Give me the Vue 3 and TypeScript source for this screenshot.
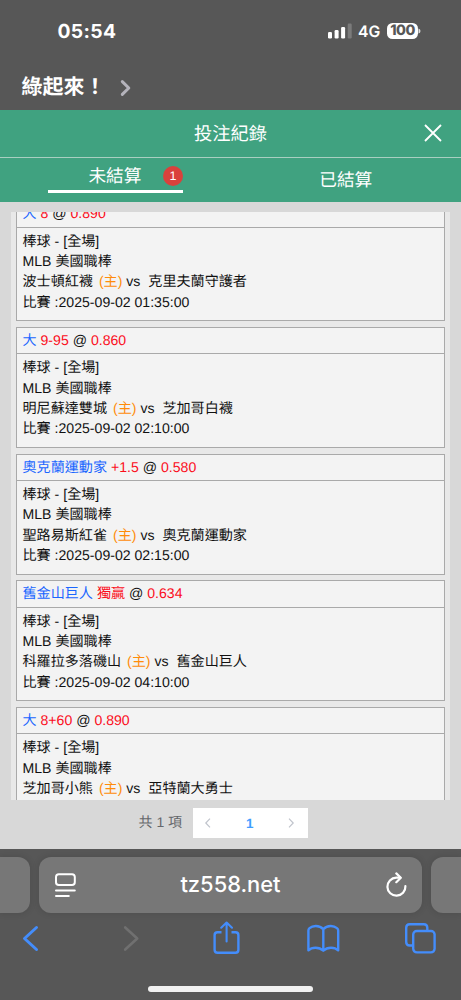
<script setup lang="ts">
interface Bet {
  pick: string
  line: string
  odds: string
  home: string
  away: string
  time?: string
}

const bets: Bet[] = [
  { pick: '大', line: '8', odds: '0.890', home: '波士頓紅襪', away: '克里夫蘭守護者', time: '2025-09-02 01:35:00' },
  { pick: '大', line: '9-95', odds: '0.860', home: '明尼蘇達雙城', away: '芝加哥白襪', time: '2025-09-02 02:10:00' },
  { pick: '奧克蘭運動家', line: '+1.5', odds: '0.580', home: '聖路易斯紅雀', away: '奧克蘭運動家', time: '2025-09-02 02:15:00' },
  { pick: '舊金山巨人', line: '獨贏', odds: '0.634', home: '科羅拉多落磯山', away: '舊金山巨人', time: '2025-09-02 04:10:00' },
  { pick: '大', line: '8+60', odds: '0.890', home: '芝加哥小熊', away: '亞特蘭大勇士' },
]
</script>

<template>
  <div class="screen">
    <div class="status">
      <span class="clock">05:54</span>
      <div class="indicators">
        <svg class="signal" width="24" height="16" viewBox="0 0 24 16">
          <rect x="0" y="9" width="4" height="6.5" rx="1.2" fill="#fff" />
          <rect x="6.6" y="7" width="4" height="8.5" rx="1.2" fill="#fff" />
          <rect x="13.1" y="4" width="4" height="11.5" rx="1.2" fill="#fff" />
          <rect x="19.7" y="0.5" width="4" height="15" rx="1.2" fill="#7b7b7b" />
        </svg>
        <span class="network">4G</span>
        <span class="battery">100</span>
        <svg class="cap" width="3" height="6" viewBox="0 0 3 6"><path d="M0.5 0.5Q2.5 1 2.5 3T0.5 5.5Z" fill="#ddd" /></svg>
      </div>
    </div>
    <div class="page-title">
      <span>綠起來！</span>
      <svg width="12" height="18" viewBox="0 0 12 18"><path d="M2.3 2.6L8.8 9L2.3 15.4" fill="none" stroke="#b4b3bb" stroke-width="3" stroke-linecap="round" stroke-linejoin="round" /></svg>
    </div>

    <section class="modal">
      <header class="modal-head">
        <span>投注紀錄</span>
        <svg class="close" width="18" height="18" viewBox="0 0 18 18"><path d="M1 1L17 17M17 1L1 17" stroke="#fff" stroke-width="1.8" /></svg>
      </header>
      <nav class="tabs">
        <div class="tab">
          <div class="tab-inner">
            <span class="tab-label">未結算</span>
            <span class="badge">1</span>
          </div>
        </div>
        <div class="tab other">已結算</div>
      </nav>
      <div class="list">
        <article v-for="(bet, i) in bets" :key="i" class="card">
          <div class="card-head"><span class="pick">{{ bet.pick }}</span> <span class="red">{{ bet.line }}</span> @ <span class="red">{{ bet.odds }}</span></div>
          <div class="card-body">
            <div>棒球 - [全場]</div>
            <div>MLB 美國職棒</div>
            <div>{{ bet.home }} <span class="host">(主)</span> vs <span class="away">{{ bet.away }}</span></div>
            <div v-if="bet.time">比賽 :{{ bet.time }}</div>
          </div>
        </article>
      </div>
      <footer class="pager">
        <span class="total">共 1 項</span>
        <div class="pages">
          <svg width="8" height="12" viewBox="0 0 8 12"><path d="M6 1.7L1.8 6L6 10.3" fill="none" stroke="#c0c4cc" stroke-width="1.2" /></svg>
          <b>1</b>
          <svg width="8" height="12" viewBox="0 0 8 12"><path d="M2 1.7L6.2 6L2 10.3" fill="none" stroke="#c0c4cc" stroke-width="1.2" /></svg>
        </div>
      </footer>
    </section>

    <div class="browser">
      <div class="address-row">
        <div class="side left"></div>
        <div class="address">
          <svg width="22" height="26" viewBox="0 0 22 26" fill="none" stroke="#fff" stroke-width="2" stroke-linecap="round">
            <rect x="2" y="2.3" width="18.8" height="10.8" rx="2.8" />
            <path d="M2 18.6H20.8M2 24H14.8" />
          </svg>
          <span class="url">tz558.net</span>
          <svg width="22" height="26" viewBox="0 0 22 26" fill="none" stroke="#fff" stroke-width="2.2" stroke-linecap="round" stroke-linejoin="round">
            <path d="M15.2 5.7H11.3A9 9 0 1 0 20.4 14.2" />
            <path d="M11.3 1.4L15.8 5.7L11.3 10.2" />
          </svg>
        </div>
        <div class="side right"></div>
      </div>
      <div class="tools">
        <svg width="461" height="50" viewBox="0 913 461 50" fill="none" stroke="#448dfb" stroke-width="2.4" stroke-linecap="round" stroke-linejoin="round">
          <path d="M36.5 927.5L24.5 938.5L36.5 949.5" stroke-width="3" />
          <path d="M125.2 927.5L137.2 938.5L125.2 949.5" stroke="#707070" stroke-width="2.6" />
          <path d="M221.5 932.3H217.5Q214.6 932.3 214.6 935.2V949.8Q214.6 952.8 217.5 952.8H235.5Q238.4 952.8 238.4 949.8V935.2Q238.4 932.3 235.5 932.3H231.5" stroke-linecap="butt" />
          <path d="M226.6 941.5V923M221.2 927.7L226.6 922.5L232 927.7" stroke-width="2.1" />
          <path d="M323.3 929.3Q320.5 926 315.8 926Q312 926 309.5 928.2Q308.4 929.2 308.4 930.5V950.3Q311 947.7 315.5 947.7Q320.2 947.7 323.3 950.7Q326.4 947.7 331 947.7Q335.5 947.7 338.2 950.3V930.5Q338.2 929.2 337 928.2Q334.5 926 330.8 926Q326.1 926 323.3 929.3V950" />
          <path d="M412.8 945.5H409.8Q406.2 945.5 406.2 942V927.8Q406.2 924.2 409.8 924.2H423.8Q427.3 924.2 427.3 927.8V930.4" />
          <rect x="413.2" y="931" width="21.4" height="21.4" rx="3.6" />
        </svg>
      </div>
      <div class="home-bar"></div>
    </div>
  </div>
</template>

<style>
body {
  margin: 0;
  background: #575757;
}
</style>

<style scoped>
.screen {
  width: 461px;
  height: 1000px;
  overflow: hidden;
  background: #575757;
  color: #fff;
  font-family: "Liberation Sans", "Noto Sans CJK TC", sans-serif;
  text-rendering: geometricPrecision;
  display: flex;
  flex-direction: column;
}
.status {
  height: 64px;
  box-sizing: border-box;
  padding: 20px 40px 0 57.5px;
  display: flex;
  justify-content: space-between;
  align-items: flex-start;
  font-family: Inter, sans-serif;
}
.clock {
  font-size: 19.3px;
  line-height: 23px;
  font-weight: 700;
  letter-spacing: 0.35px;
}
.indicators {
  display: flex;
  align-items: center;
  height: 22px;
}
.network {
  font-size: 15.7px;
  font-weight: 600;
  width: 22px;
  margin: 1px 7px 0 6.5px;
  line-height: 20px;
}
.battery {
  width: 31px;
  height: 16.5px;
  border-radius: 5.5px;
  background: #fff;
  color: #575757;
  font-size: 14.3px;
  line-height: 16.5px;
  font-weight: 800;
  letter-spacing: -0.5px;
  text-align: center;
}
.page-title {
  height: 46px;
  box-sizing: border-box;
  padding: 0 0 0 21.5px;
  display: flex;
  align-items: flex-start;
  gap: 14px;
  font-size: 21px;
  line-height: 44px;
  font-weight: 700;
  font-family: "Noto Sans CJK TC", sans-serif;
}
.page-title svg {
  margin-top: 15px;
}
.modal {
  height: 738.5px;
  flex: none;
  background: #d8d8d8;
}
.modal-head {
  height: 47px;
  background: #40a280;
  border-bottom: 1px solid #a9cfc1;
  position: relative;
  text-align: center;
  font-size: 18.3px;
  line-height: 47px;
}
.close {
  position: absolute;
  right: 19px;
  top: 14px;
}
.tabs {
  height: 43.5px;
  background: #40a280;
  display: flex;
  font-size: 17.7px;
}
.tab {
  flex: 1;
}
.tab-inner {
  width: 135px;
  height: 32px;
  margin-left: 48px;
  border-bottom: 3px solid #fff;
  display: flex;
  align-items: center;
  justify-content: flex-end;
}
.tab-label {
  margin-right: 21.5px;
  line-height: 36px;
  margin-top: 4px;
}
.badge {
  width: 20px;
  height: 20px;
  border-radius: 50%;
  background: #da413c;
  font-size: 12.5px;
  line-height: 20px;
  margin-top: 4px;
  text-align: center;
}
.other {
  text-align: center;
  line-height: 44.5px;
}
.list {
  width: 439.5px;
  height: 588px;
  margin: 10.5px 0 0 10.5px;
  background: #e8e8e8;
  overflow: hidden;
  color: #111;
}
.card {
  width: 429px;
  height: 121px;
  box-sizing: border-box;
  margin: 0 0 5.7px 5.5px;
  border: 1px solid #a9a9a9;
  background: #f3f3f3;
  font-size: 14.1px;
  white-space: nowrap;
}
.card:first-child {
  margin-top: -11.8px;
}
.card-head {
  height: 25.5px;
  padding-left: 5.5px;
  line-height: 25px;
  border-bottom: 1px solid #a9a9a9;
}
.card-body {
  padding: 3px 0 0 5.5px;
}
.card-body div {
  height: 20.3px;
  line-height: 20.3px;
}
.pick {
  color: #1a66ff;
}
.red {
  color: #fb0d1b;
}
.host {
  color: #ff8c0a;
  margin-left: 2px;
}
.away {
  margin-left: 4px;
}
.pager {
  height: 30px;
  margin-top: 8px;
  padding-left: 138.5px;
  display: flex;
  align-items: center;
  color: #65676b;
  font-size: 14px;
}
.total {
  width: 54.5px;
  margin-top: -2px;
  white-space: nowrap;
}
.pages {
  width: 114.5px;
  height: 30px;
  box-sizing: border-box;
  padding: 0 12px 0 11px;
  background: #fff;
  display: flex;
  align-items: center;
  justify-content: space-between;
}
.pages b {
  color: #409eff;
  font-size: 13.5px;
}
.browser {
  flex: 1;
  box-sizing: border-box;
  padding-top: 8.5px;
}
.address-row {
  display: flex;
  gap: 9px;
  height: 56px;
}
.side,
.address {
  background: #777;
  box-shadow: 0 0 7px rgba(0, 0, 0, 0.13);
}
.side {
  width: 30px;
  flex: none;
}
.left {
  border-radius: 0 12px 12px 0;
}
.right {
  border-radius: 12px 0 0 12px;
}
.address {
  width: 383px;
  flex: none;
  box-sizing: border-box;
  padding: 0 15px;
  border-radius: 12px;
  display: flex;
  align-items: center;
  justify-content: space-between;
}
.url {
  font: 500 21.9px/58px Inter, sans-serif;
}
.tools {
  height: 50px;
}
.tools svg {
  display: block;
}
.home-bar {
  width: 165px;
  height: 6px;
  margin: 22.5px 0 0 148px;
  border-radius: 3px;
  background: #f1f1f1;
}
</style>
